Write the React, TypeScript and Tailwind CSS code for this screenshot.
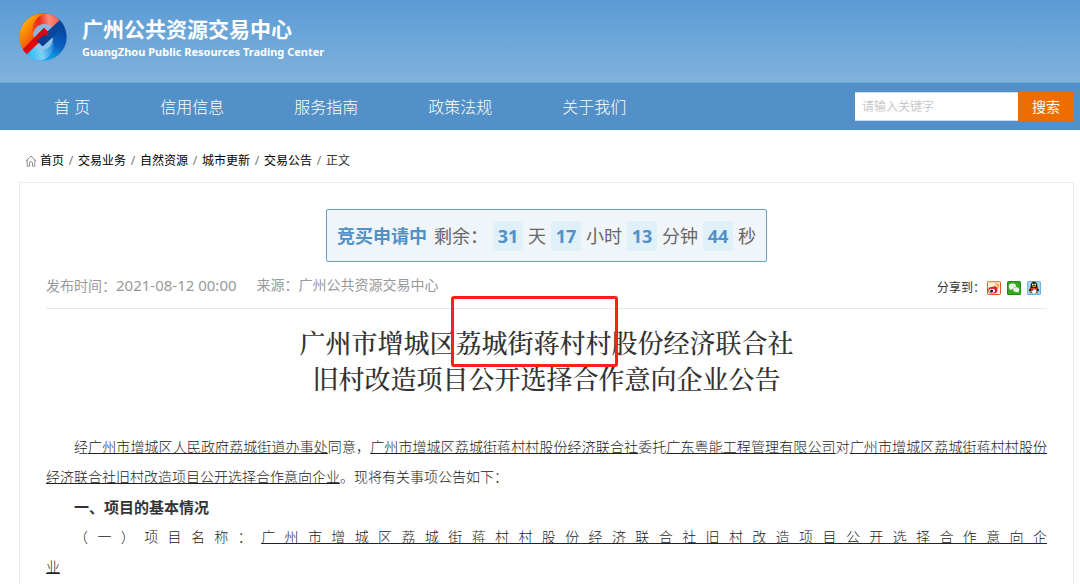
import React from "react";

const NAV = ["首 页", "信用信息", "服务指南", "政策法规", "关于我们"];
const CRUMBS = ["首页", "交易业务", "自然资源", "城市更新", "交易公告"];
const COUNTDOWN = [
  { value: "31", unit: "天" },
  { value: "17", unit: "小时" },
  { value: "13", unit: "分钟" },
  { value: "44", unit: "秒" },
];

function Logo() {
  return (
    <svg viewBox="0 0 48 48" className="size-12 shrink-0" aria-hidden="true">
      <defs>
        <clipPath id="disc">
          <circle cx="24" cy="24" r="23.7" />
        </clipPath>
        <linearGradient id="warm" x1="0.1" y1="0.2" x2="0.6" y2="0.6">
          <stop offset="0" stopColor="#ffae00" />
          <stop offset="0.5" stopColor="#f7600e" />
          <stop offset="1" stopColor="#e60b12" />
        </linearGradient>
        <linearGradient id="cool" gradientUnits="userSpaceOnUse" x1="42" y1="12" x2="26" y2="48">
          <stop offset="0" stopColor="#06429c" />
          <stop offset="0.5" stopColor="#0a5fc0" />
          <stop offset="1" stopColor="#12b4f2" />
        </linearGradient>
        <linearGradient id="pink" gradientUnits="userSpaceOnUse" x1="13" y1="14" x2="40" y2="10">
          <stop offset="0" stopColor="#f2500f" />
          <stop offset="0.3" stopColor="#ea2a1c" />
          <stop offset="0.65" stopColor="#fb8a7c" />
          <stop offset="1" stopColor="#f4604c" />
        </linearGradient>
        <linearGradient id="ice" gradientUnits="userSpaceOnUse" x1="8" y1="40" x2="36" y2="34">
          <stop offset="0" stopColor="#22bdf5" />
          <stop offset="0.5" stopColor="#7ed0f6" />
          <stop offset="1" stopColor="#1580d4" />
        </linearGradient>
      </defs>
      <g clipPath="url(#disc)">
        <rect width="48" height="48" fill="url(#cool)" />
        <path d="M0 0H48L8 40L0 48Z" fill="url(#warm)" />
        <path d="M14 20C12 10 18 2 29 0C35 1 38 4 41 7L32 16C28 11 19 10 14 20Z" fill="url(#pink)" />
        <path d="M14 23C14 16 19 11 25 11C29 11 31 12 33 15L29 19L25 15L16 24Z" fill="#8fb5dc" />
        <path d="M7 41L16 32C21 38 29 38 34 28C37 39 29 47 19 48C13 47 10 44 7 41Z" fill="url(#ice)" />
        <path d="M34 25C34 32 29 37 23 37C19 37 17 36 15 33L19 29L23 33L32 24Z" fill="#8ec3ea" />
        <path d="M25 15L30 20L8 41L2 38L15 25Z" fill="#e3050f" />
        <path d="M24 33L18 28L41 7L46 12L33 25Z" fill="#07469f" />
        <path d="M25 15L30 20L18 30L17 23Z" fill="#d00a18" />
        <path d="M24 33L18 28L25 22L31 26Z" fill="#0b3f92" />
      </g>
    </svg>
  );
}

function HomeIcon() {
  return (
    <svg viewBox="0 0 12 12" className="size-3 shrink-0" fill="none" stroke="#8c8c8c" strokeWidth="1" aria-hidden="true">
      <path d="M0.8 6L6 1L11.2 6M2.2 5V11.2H4.5V7.8Q4.5 6.8 6 6.8T7.5 7.8V11.2H9.8V5" />
    </svg>
  );
}

function WeiboIcon() {
  return (
    <svg viewBox="0 0 14 14" className="size-3.5" aria-hidden="true">
      <rect x="0.5" y="0.5" width="13" height="13" rx="1" fill="#fdeee2" stroke="#e8542c" />
      <path d="M1 0.7H13" stroke="#f58a2a" strokeWidth="1.2" />
      <ellipse cx="5.8" cy="9.2" rx="4.6" ry="3.4" fill="#e0202a" />
      <ellipse cx="5" cy="9.8" rx="3" ry="2.1" fill="#fff" />
      <circle cx="4.6" cy="10" r="1.5" fill="#111" />
      <path d="M8.5 3.2Q11.5 3 11.3 6.5" fill="none" stroke="#f5a037" strokeWidth="1.8" />
      <path d="M7 5.4L10.4 7.6" stroke="#e0202a" strokeWidth="1.6" />
    </svg>
  );
}

function WechatIcon() {
  return (
    <svg viewBox="0 0 14 14" className="size-3.5" aria-hidden="true">
      <rect width="14" height="14" rx="1.5" fill="#1c8f10" />
      <rect x="1" y="1" width="12" height="12" rx="1" fill="#35a820" />
      <ellipse cx="5.4" cy="5.4" rx="3.6" ry="2.9" fill="#fff" />
      <path d="M3 7L2.8 9L5 8Z" fill="#fff" />
      <ellipse cx="9.2" cy="8.6" rx="3.2" ry="2.6" fill="#fff" stroke="#35a820" strokeWidth="0.5" />
      <path d="M10 10.6L11.6 11.8L11.4 9.8Z" fill="#fff" />
      <g fill="#35a820">
        <circle cx="4.2" cy="4.8" r="0.5" />
        <circle cx="6.6" cy="4.8" r="0.5" />
        <circle cx="8.2" cy="8" r="0.4" />
        <circle cx="10.2" cy="8" r="0.4" />
      </g>
    </svg>
  );
}

function QQIcon() {
  return (
    <svg viewBox="0 0 14 14" className="size-3.5" aria-hidden="true">
      <rect width="14" height="14" rx="1.5" fill="#69b4e6" />
      <rect x="1" y="1" width="12" height="12" fill="#a5d5f4" />
      <path d="M3.6 6C3.4 2.6 4.8 0.8 7 0.8S10.6 2.6 10.4 6L12.2 9.6L11.4 10.6L10.4 9.8V12H3.6V9.8L2.6 10.6L1.8 9.6Z" fill="#1a1a1a" />
      <ellipse cx="7" cy="10" rx="2.6" ry="2.7" fill="#fff" />
      <ellipse cx="5.8" cy="3.6" rx="0.8" ry="1.1" fill="#fff" />
      <ellipse cx="8.2" cy="3.6" rx="0.8" ry="1.1" fill="#fff" />
      <ellipse cx="7" cy="5.6" rx="2" ry="0.7" fill="#f7a81b" />
      <path d="M3.4 6.5Q7 8.6 10.6 6.5V8Q7 9.6 3.4 8Z" fill="#e0261c" />
      <path d="M4.4 7.6H5.8V10H4.4Z" fill="#e0261c" />
      <ellipse cx="4.6" cy="12.6" rx="2" ry="0.8" fill="#f7a81b" />
      <ellipse cx="9.4" cy="12.6" rx="2" ry="0.8" fill="#f7a81b" />
    </svg>
  );
}

export default function App() {
  return (
    <div className="flex min-h-screen flex-col bg-white font-['Noto_Sans','Noto_Sans_CJK_SC',sans-serif] text-[#333]">
      <header className="flex items-start gap-[15px] border-b border-[#6ea6d6] bg-linear-to-b from-[#5b9bd4] to-[#80b2dc] pt-[13px] pb-5 pl-[19px] text-white">
        <Logo />
        <div className="pt-[3px] font-bold">
          <h1 className="text-[21px] leading-[26px]">广州公共资源交易中心</h1>
          <p className="text-[11px] leading-[20px]">GuangZhou Public Resources Trading Center</p>
        </div>
      </header>

      <nav className="flex items-center justify-between bg-[#5290c7] py-[9px] pr-[6px] pl-[54px]">
        <ul className="flex gap-[70px] text-base font-light text-white">
          {NAV.map((item) => (
            <li key={item}>
              <a href="#">{item}</a>
            </li>
          ))}
        </ul>
        <form className="flex h-[29px]" onSubmit={(e) => e.preventDefault()}>
          <input
            type="text"
            aria-label="请输入关键字"
            placeholder="请输入关键字"
            className="w-[163px] border-y border-[#c5dcef] bg-white px-[7px] text-xs text-[#333] outline-none placeholder:text-[#c8c8c8]"
          />
          <button type="submit" className="w-14 bg-[#ed6d00] text-sm text-white">
            搜索
          </button>
        </form>
      </nav>

      <div className="flex items-center pt-[21px] pb-[11px] pl-[25px] text-xs leading-5 text-black">
        <HomeIcon />
        <div className="flex pl-[3px]">
          {CRUMBS.map((item) => (
            <React.Fragment key={item}>
              <a href="#">{item}</a>
              <span className="w-[14px] text-center text-[#777]">/</span>
            </React.Fragment>
          ))}
          <span className="text-[#333]">正文</span>
        </div>
      </div>

      <main className="mr-[6px] ml-[19px] grow border border-b-0 border-[#ebebeb] px-[26px] pt-[26px]">
        <div className="mx-auto flex w-fit items-center gap-[5px] rounded-[2px] border border-[#6b9fcd] bg-[#f0f5fa] px-[10px] pt-[11px] pb-[10px] text-lg leading-[30px] text-[#666]">
          <strong className="mr-[2px] text-[#5290c7]">竞买申请中</strong>
          <span>剩余：</span>
          {COUNTDOWN.map(({ value, unit }) => (
            <React.Fragment key={unit}>
              <b className="w-[30px] rounded-[2px] bg-[#dff0f8] text-center text-[#5290c7]">{value}</b>
              <span>{unit}</span>
            </React.Fragment>
          ))}
        </div>

        <div className="flex items-center justify-between border-b border-[#e6e6e6] pt-3 pb-[11px]">
          <div className="flex gap-5 text-sm leading-[22px] text-[#999]">
            <span>
              发布时间：<time className="text-[15px]">2021-08-12 00:00</time>
            </span>
            <span>来源：广州公共资源交易中心</span>
          </div>
          <div className="flex items-center gap-0.5 pt-1 pr-[6px] text-xs">
            <span>分享到：</span>
            <div className="flex gap-1.5">
              <a href="#" aria-label="新浪微博"><WeiboIcon /></a>
              <a href="#" aria-label="微信"><WechatIcon /></a>
              <a href="#" aria-label="QQ"><QQIcon /></a>
            </div>
          </div>
        </div>

        <h2 className="pt-[15px] text-center font-['Noto_Serif_CJK_SC','Noto_Sans_CJK_SC',serif] text-[26px] leading-9 font-medium">
          广州市增城区
          <span className="relative">
            荔城街蒋村村
            <span className="absolute -top-[27px] -right-1.5 -bottom-[7px] -left-1 rounded-[3px] border-3 border-[#ff1f17]" />
          </span>
          股份经济联合社
          <br />
          旧村改造项目公开选择合作意向企业公告
        </h2>

        <article className="pt-9 text-sm leading-[30px]">
          <p className="text-justify indent-7 font-light text-[#222]">
            经<u>广州市增城区人民政府荔城街道办事处</u>同意，<u>广州市增城区荔城街蒋村村股份经济联合社</u>委托
            <u>广东粤能工程管理有限公司</u>对<u>广州市增城区荔城街蒋村村股份经济联合社旧村改造项目公开选择合作意向企业</u>。现将有关事项公告如下：
          </p>
          <h3 className="indent-7 text-[15px] font-bold">一、项目的基本情况</h3>
          <p className="indent-7 font-light text-[#222]">
            <span className="block [text-align-last:justify]">
              （一）项目名称：<u>广州市增城区荔城街蒋村村股份经济联合社旧村改造项目公开选择合作意向企</u>
            </span>
            <u className="block indent-0">业</u>
          </p>
        </article>
      </main>
    </div>
  );
}
